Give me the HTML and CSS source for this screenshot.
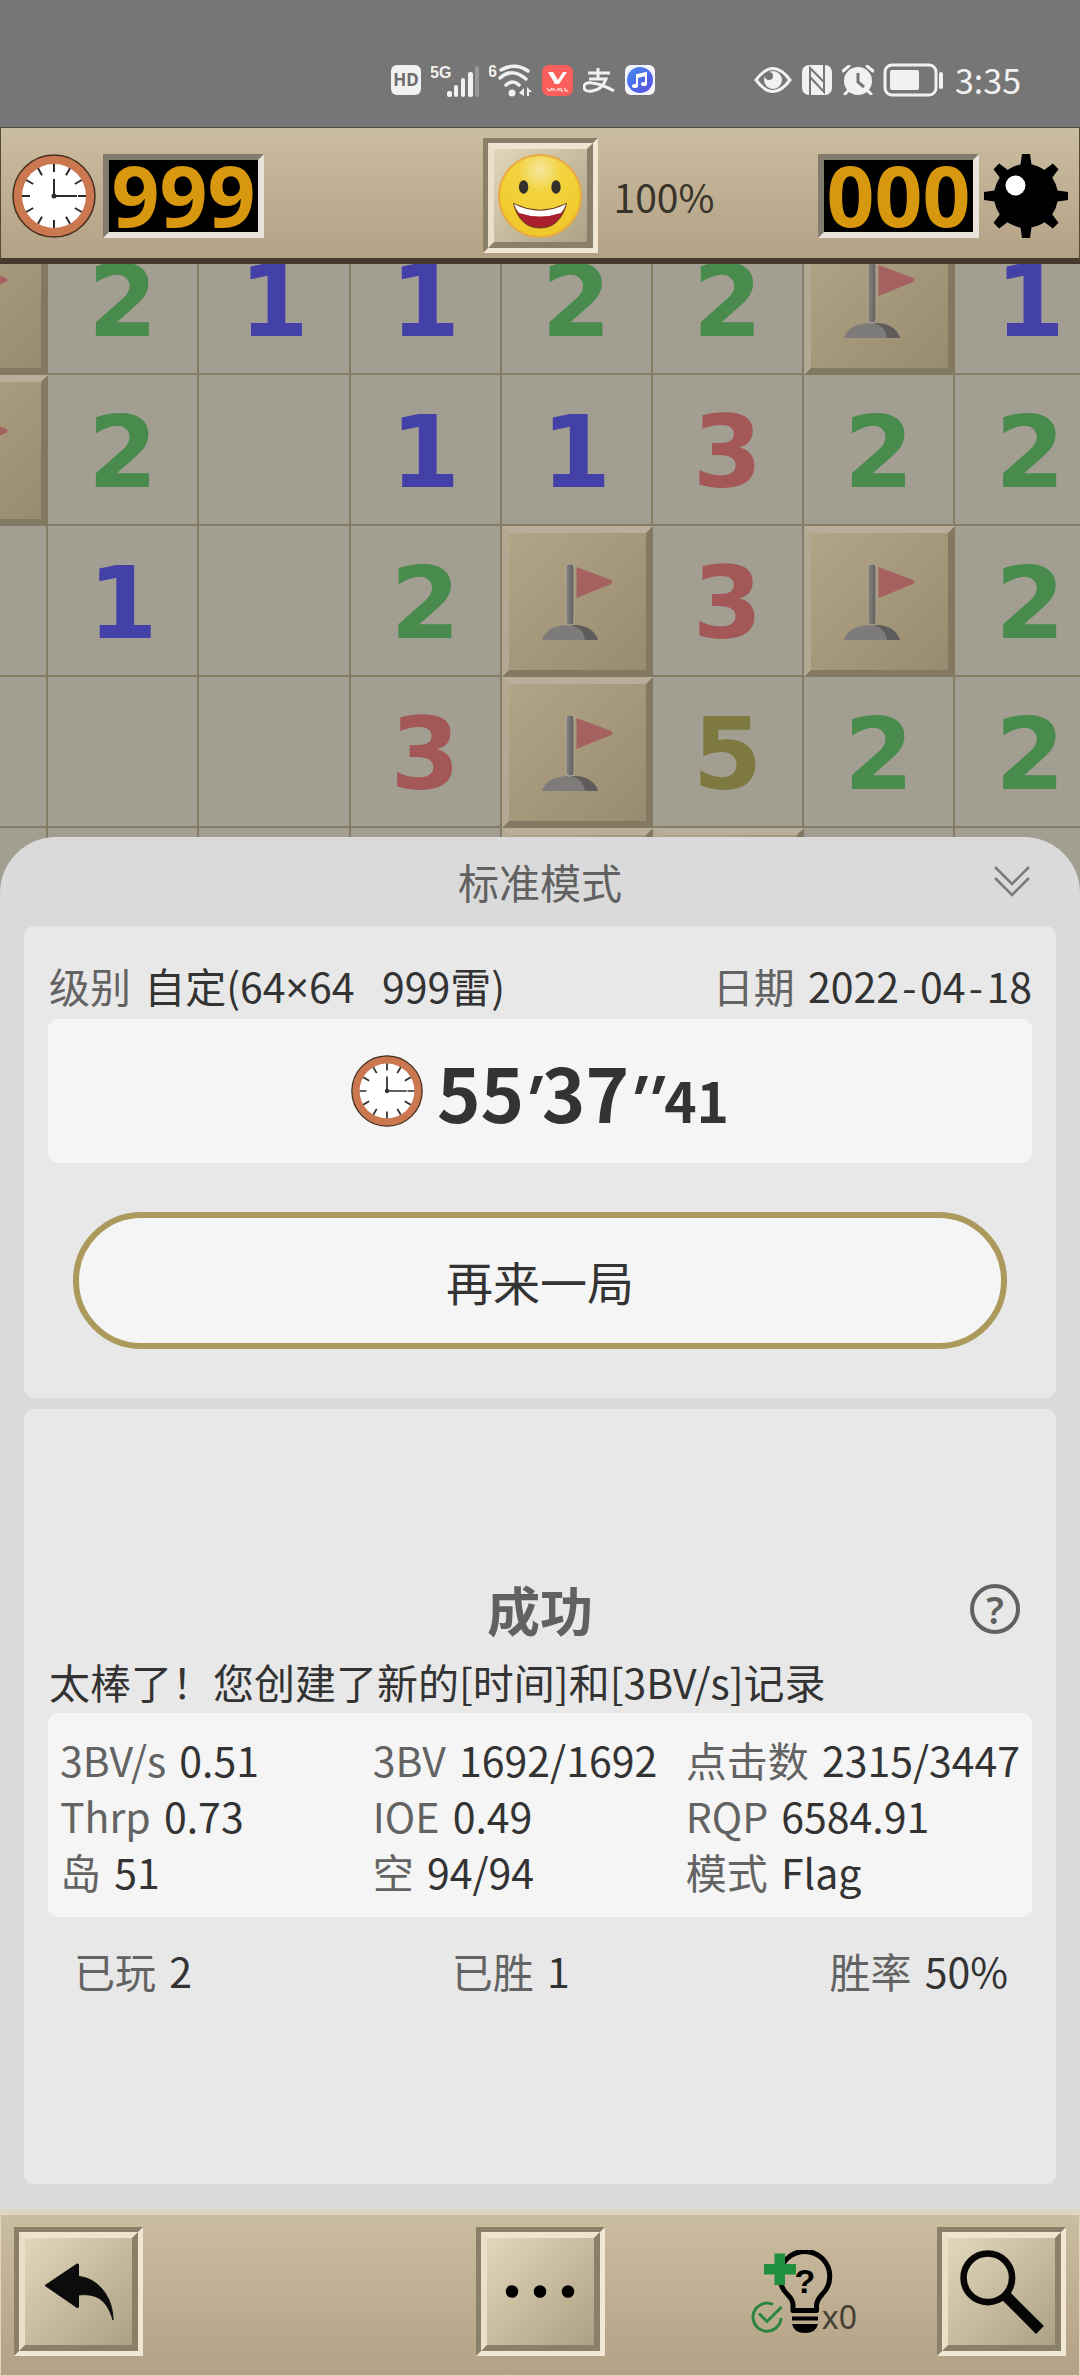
FILE: index.html
```
<!DOCTYPE html>
<html lang="zh-CN">
<head>
<meta charset="utf-8">
<meta name="viewport" content="width=device-width, initial-scale=1">
<title>标准模式</title>
<link rel="stylesheet" href="styles.css">
</head>
<body>
<svg class="defs" aria-hidden="true">
  <defs>
    <linearGradient id="pole" x1="0" x2="1" y1="0" y2="0"><stop offset="0" stop-color="#858482"/><stop offset="1" stop-color="#62605e"/></linearGradient>
    <radialGradient id="faceFill" cx=".5" cy=".18" r=".75"><stop offset="0" stop-color="#f6e6a0"/><stop offset=".35" stop-color="#f2d33e"/><stop offset="1" stop-color="#f0c92c"/></radialGradient>
    <linearGradient id="musicFill" x1="0" x2="1" y1="0" y2="1"><stop offset="0" stop-color="#3f8df2"/><stop offset="1" stop-color="#5a4be0"/></linearGradient>
    <symbol id="flag" viewBox="0 0 137 137">
      <path d="M33 107C36 97 46 92 61 92s25 5 28 15z" fill="#7d7c7a"/>
      <path d="M62 92c14-1 24 5 27 15H76c-1-8-6-13-14-15z" fill="#5f5d5b"/>
      <rect x="57" y="31" width="8" height="61" rx="3" fill="url(#pole)" stroke="#b3a894" stroke-width="1"/>
      <path d="M67.500 34L102 47q3 2 0 4L67.500 65z" fill="#a56160"/>
    </symbol>
    <symbol id="clock" viewBox="0 0 84 84">
      <circle cx="42" cy="42" r="41" fill="#cb7750" stroke="#45301f" stroke-width="1.500"/>
      <circle cx="42" cy="42" r="32" fill="#fff"/>
      <g stroke="#2e2b2b" stroke-width="2" fill="none">
        <path d="M42 10v8M42 74v-8M10 42h8M74 42h-8M26 14.300l4 6.900M58 14.300l-4 6.900M26 69.700l4-6.900M58 69.700l-4-6.900M14.300 26l6.900 4M69.700 26l-6.900 4M14.300 58l6.900-4M69.700 58l-6.900-4"/>
        <path d="M42 25v17h23"/>
      </g>
      <circle cx="42" cy="42" r="2.500" fill="#2e2b2b"/>
    </symbol>
  </defs>
</svg>

<div class="status">
  <div class="status-group">
    <svg class="s-hd" viewBox="0 0 30 30" role="img" aria-label="HD"><rect width="30" height="30" rx="6" fill="#f1f1f1"/><text x="15" y="21" text-anchor="middle" class="hd-text">HD</text></svg>
    <svg class="s-signal" viewBox="0 0 48 34" role="img" aria-label="5G">
      <text x="-1" y="15" class="tiny-text">5G</text>
      <g fill="#f1f1f1"><rect x="16" y="28" width="5" height="6" rx="2"/><rect x="23" y="22" width="4" height="12" rx="2"/><rect x="30" y="15" width="4" height="19" rx="2"/><rect x="37" y="9" width="5" height="25" rx="2"/></g>
      <rect x="44" y="3" width="4" height="31" rx="2" fill="#979797"/>
    </svg>
    <svg class="s-wifi" viewBox="0 0 43 34" role="img" aria-label="Wi-Fi 6">
      <text x="-1" y="14" class="tiny-text">6</text>
      <g fill="none" stroke="#f1f1f1" stroke-width="3.500" stroke-linecap="round"><path d="M12 7q14-8 27 1M11 15q12-11 26 1M17 22q7-6 13 0"/></g>
      <circle cx="23" cy="30" r="3.500" fill="#f1f1f1"/>
      <path d="M30 30l5-5v8zM38 24l5 5h-3v4h-2z" fill="#f1f1f1"/>
    </svg>
    <svg class="s-vhall" viewBox="0 0 31 31" role="img" aria-label="Vhall"><rect width="31" height="31" rx="7" fill="#fb5f5b"/><path d="M6 7h5l5 8 5-8h4l-8 12h-4z" fill="#fff"/><path d="M5 23l2 3 3-3v3M12 23v3M14 26l3-3v3M19 23v3h2M23 23v3h3" fill="none" stroke="#fff"/></svg>
    <svg class="s-pay" viewBox="0 0 32 30" role="img" aria-label="支付宝"><path d="M5 8h22M15 3v10M6 14h17q-4 11-14 12-8 1-8-4 0-5 8-4 10 1 22 8" fill="none" stroke="#f1f1f1" stroke-width="3"/></svg>
    <svg class="s-music" viewBox="0 0 30 30" role="img" aria-label="音乐"><rect width="30" height="30" rx="6" fill="#f5f3fc"/><circle cx="15" cy="15" r="13" fill="url(#musicFill)"/><path d="M12 21V10l9-2v11M12 12l9-2" fill="none" stroke="#fff" stroke-width="2"/><ellipse cx="10" cy="21" rx="3" ry="2" fill="#fff"/><ellipse cx="19" cy="19" rx="3" ry="2" fill="#fff"/></svg>
  </div>
  <div class="status-group">
    <svg class="s-eye" viewBox="0 0 38 26" role="img" aria-label="护眼"><path d="M2 13Q19-10 36 13 19 36 2 13z" fill="none" stroke="#f1f1f1" stroke-width="3"/><circle cx="19" cy="13" r="9" fill="#f1f1f1"/><circle cx="15" cy="9" r="4" fill="#767676"/></svg>
    <svg class="s-nfc" viewBox="0 0 30 30" role="img" aria-label="NFC"><rect width="30" height="30" rx="7" fill="#f1f1f1"/><path d="M8 30V3l14 14V3M8 12l14 15V0" fill="none" stroke="#767676" stroke-width="2"/></svg>
    <svg class="s-alarm" viewBox="0 0 32 30" role="img" aria-label="闹钟"><circle cx="16" cy="16" r="14" fill="#f1f1f1"/><path d="M1 6l6-5M31 6l-6-5M3 29l5-5M29 29l-5-5" stroke="#f1f1f1" stroke-width="3" stroke-linecap="round"/><path d="M16 8v9l6 5" fill="none" stroke="#767676" stroke-width="3"/></svg>
    <svg class="s-battery" viewBox="0 0 59 32" role="img" aria-label="电量"><rect x="1" y="1" width="51" height="30" rx="7" fill="none" stroke="#f1f1f1" stroke-width="3"/><rect x="6" y="6" width="29" height="20" rx="2" fill="#f1f1f1"/><rect x="55" y="8" width="4" height="17" rx="2" fill="#f1f1f1"/></svg>
    <time class="status-time">3:35</time>
  </div>
</div>

<header class="topbar">
  <div class="top-left">
    <svg class="icon-lg" role="img" aria-label="用时"><use href="#clock"/></svg>
    <output class="counter">999</output>
  </div>
  <button class="bevel bevel-face" type="button" aria-label="重新开始"><span class="bevel-face-inner">
    <svg class="icon-lg" viewBox="0 0 84 84">
      <circle cx="42" cy="42" r="41" fill="url(#faceFill)" stroke="#e9a93f" stroke-width="2"/>
      <ellipse cx="25.600" cy="33" rx="4.700" ry="6.700" fill="#33302c"/><ellipse cx="58" cy="33" rx="4.700" ry="6.700" fill="#33302c"/>
      <path d="M15.500 49.500Q42 63 68.500 49.500 62 74 42 74T15.500 49.500z" fill="#a9202c" stroke="#5d3d1c" stroke-width="1"/>
      <path d="M16 50Q42 63.500 68 50 66 56 63 59 42 66 21 59 18 56 16 50z" fill="#fff"/>
    </svg></span></button>
  <div class="top-right">
    <span class="percent">100%</span>
    <div class="mines">
      <output class="counter">000</output>
      <svg class="icon-lg" viewBox="0 0 84 84" role="img" aria-label="剩余地雷">
        <circle cx="42" cy="42" r="32"/>
        <path id="spike" d="M36 14l2-14h8l2 14v56l-2 14h-8l-2-14z"/>
        <use href="#spike" transform="rotate(45 42 42)"/><use href="#spike" transform="rotate(90 42 42)"/><use href="#spike" transform="rotate(135 42 42)"/>
        <circle cx="31.500" cy="31.500" r="10" fill="#fff"/>
      </svg>
    </div>
  </div>
</header>

<main>
  <div class="board">
    <div class="cells">
      <div class="cell tile"><svg><use href="#flag"/></svg></div><div class="cell n2">2</div><div class="cell n1">1</div><div class="cell n1">1</div><div class="cell n2">2</div><div class="cell n2">2</div><div class="cell tile"><svg><use href="#flag"/></svg></div><div class="cell n1">1</div>
      <div class="cell tile"><svg><use href="#flag"/></svg></div><div class="cell n2">2</div><div class="cell"></div><div class="cell n1">1</div><div class="cell n1">1</div><div class="cell n3">3</div><div class="cell n2">2</div><div class="cell n2">2</div>
      <div class="cell n2">2</div><div class="cell n1">1</div><div class="cell"></div><div class="cell n2">2</div><div class="cell tile"><svg><use href="#flag"/></svg></div><div class="cell n3">3</div><div class="cell tile"><svg><use href="#flag"/></svg></div><div class="cell n2">2</div>
      <div class="cell n2">2</div><div class="cell"></div><div class="cell"></div><div class="cell n3">3</div><div class="cell tile"><svg><use href="#flag"/></svg></div><div class="cell n5">5</div><div class="cell n2">2</div><div class="cell n2">2</div>
      <div class="cell"></div><div class="cell"></div><div class="cell"></div><div class="cell"></div><div class="cell tile"></div><div class="cell tile"></div><div class="cell"></div><div class="cell"></div>
    </div>
  </div>

  <section class="sheet">
    <div class="sheet-head">
      <h1>标准模式</h1>
      <button class="plain collapse" type="button" aria-label="收起"><svg viewBox="0 0 36 32"><path d="M1 2l17 17L35 2M1 13l17 17 17-17" fill="none" stroke="#7b7b7b" stroke-width="2.500"/></svg></button>
    </div>

    <div class="card">
      <dl class="meta">
        <div><dt>级别</dt> <dd>自定(64<span class="latin">×</span>64&nbsp;&nbsp; 999雷)</dd></div>
        <div><dt>日期</dt> <dd>2022<span class="dash">-</span>04<span class="dash">-</span>18</dd></div>
      </dl>
      <div class="panel time">
        <svg class="icon-md" role="img" aria-label="用时"><use href="#clock"/></svg>
        <p>55<span class="prime">′</span>37<span class="prime">″</span><small>41</small></p>
      </div>
      <button class="again" type="button">再来一局</button>
    </div>

    <div class="card result">
      <div class="result-head">
        <h2>成功</h2>
        <button class="plain help" type="button" aria-label="帮助">?</button>
      </div>
      <p class="message">太棒了！您创建了新的[时间]和[3BV/s]记录</p>
      <dl class="panel stats">
        <div><dt>3BV/s</dt> <dd>0.51</dd></div><div><dt>3BV</dt> <dd>1692/1692</dd></div><div><dt>点击数</dt> <dd>2315/3447</dd></div>
        <div><dt>Thrp</dt> <dd>0.73</dd></div><div><dt>IOE</dt> <dd>0.49</dd></div><div><dt>RQP</dt> <dd>6584.91</dd></div>
        <div><dt>岛</dt> <dd>51</dd></div><div><dt>空</dt> <dd>94/94</dd></div><div><dt>模式</dt> <dd>Flag</dd></div>
      </dl>
      <dl class="totals">
        <div><dt>已玩</dt> <dd>2</dd></div><div><dt>已胜</dt> <dd>1</dd></div><div><dt>胜率</dt> <dd>50%</dd></div>
      </dl>
    </div>
  </section>
</main>

<footer class="bottombar">
  <div class="bottom-left">
    <button class="bevel bevel-nav" type="button" aria-label="返回"><span class="bevel-face-inner"><svg class="i-back" viewBox="0 0 70 57"><path d="M1 22.500L33 1q1.500-.5 1.500 1v11.500C54 15 69 34 69 57 63 37 53 30 34.500 32v11.500q0 1.500-1.500 1z" fill="#0c0c0c" stroke="#0c0c0c" stroke-linejoin="round"/></svg></span></button>
  </div>
  <button class="bevel bevel-nav" type="button" aria-label="更多"><span class="bevel-face-inner"><svg class="i-back" viewBox="0 0 70 57"><circle cx="7" cy="28.500" r="6.300"/><circle cx="35" cy="28.500" r="6.300"/><circle cx="63" cy="28.500" r="6.300"/></svg></span></button>
  <div class="bottom-right">
    <button class="plain hint" type="button" aria-label="提示">
      <svg class="i-bulb" viewBox="0 0 83 83">
        <path d="M43 60.500h22.500V55Q66 50 71 44.500A25 25 0 1 0 36.500 44.500Q42 50 42 55v5.500z" fill="none" stroke="#000" stroke-width="5" stroke-linejoin="round"/>
        <path d="M41 66.500h26v4H41zM41 74h26q-2 9-13 9t-13-9z"/>
        <text x="54" y="43" text-anchor="middle" class="bulb-text">?</text>
        <path d="M23.500 3.500h10.500V14h11v10.500H34V35H23.500V24.500H13V14h10.500z" fill="#1f8f3e"/>
        <g fill="none" stroke="#2a8540" stroke-width="3"><path d="M22 54.500A14 14 0 1 0 30 68"/><path d="M8 63.500l8 8L30.500 57"/></g>
      </svg>
      <span>x0</span>
    </button>
    <button class="bevel bevel-nav" type="button" aria-label="缩放"><span class="bevel-face-inner"><svg class="icon-lg" viewBox="0 0 83 83"><circle cx="27.500" cy="27.500" r="24" fill="none" stroke="#060606" stroke-width="6.500"/><path d="M45 45l34 34" stroke="#060606" stroke-width="11"/></svg></span></button>
  </div>
</footer>
</body>
</html>
```
FILE: styles.css
```
* { box-sizing: border-box; }
html { background: #dadada; }
body {
  margin: 0;
  min-height: 100vh;
  display: flex;
  flex-direction: column;
  overflow-x: hidden;
  font-family: "Noto Sans CJK SC", "Noto Sans", sans-serif;
  font-size: 41px;
  line-height: 56px;
  color: #333;
}
h1, h2, p, dl, dd { margin: 0; }
svg { display: block; flex: none; }
button { font: inherit; color: inherit; padding: 0; margin: 0; border: 0; background: none; }
.defs { position: absolute; width: 0; height: 0; }
.icon-lg { width: 84px; height: 84px; }
.icon-md { width: 72px; height: 72px; }

/* system status bar */
.status {
  display: flex;
  justify-content: flex-end;
  align-items: center;
  gap: 99px;
  height: 127px;
  padding: 33px 59px 0 0;
  background: #767676;
}
.status-group { display: flex; align-items: center; gap: 10px; }
.s-hd, .s-music, .s-nfc { width: 30px; height: 30px; }
.s-signal { width: 48px; height: 34px; }
.s-wifi { width: 43px; height: 34px; }
.s-vhall { width: 31px; height: 31px; }
.s-pay, .s-alarm { width: 32px; height: 30px; }
.s-eye { width: 38px; height: 26px; }
.s-battery { width: 59px; height: 32px; overflow: visible; }
.hd-text { font: 700 17px "Noto Sans", sans-serif; fill: #6c6c6c; }
.tiny-text { font: 700 16px "Liberation Sans", sans-serif; fill: #f1f1f1; }
.status-time { padding-left: 2px; color: #f1f1f1; font-size: 34px; line-height: 34px; }

/* bars */
.topbar, .bottombar {
  display: grid;
  grid-template-columns: 1fr auto 1fr;
  align-items: center;
  background: linear-gradient(#cbbda0, #b3a185);
}
.topbar { height: 137px; padding: 5px 11px 0; border: 1px solid #55493a; border-bottom: 6px solid #44392c; }
.top-left, .mines { display: flex; align-items: center; gap: 7px; }
.top-right { display: flex; align-items: center; justify-content: space-between; padding-left: 16px; }
.mines { gap: 5px; }
.percent { font-size: 39px; color: #39342b; }
.counter {
  width: 161px;
  height: 84px;
  border: 6px solid;
  border-color: #827b6e #e9e3db #e9e3db #827b6e;
  background: #000;
  color: #d7980f;
  font: 700 84px/70px "Noto Sans", sans-serif;
  text-align: center;
}

/* raised buttons */
.bevel { display: flex; border: 5px solid; border-color: #8a8069 #f0e7d5 #f0e7d5 #8a8069; }
.bevel-face { width: 115px; height: 115px; }
.bevel-nav { width: 129px; height: 129px; }
.bevel-face-inner {
  flex: 1;
  align-self: stretch;
  display: flex;
  align-items: center;
  justify-content: center;
  border: 6px solid;
  border-color: #eee4cf #8a8069 #8a8069 #ebdfc9;
  background: linear-gradient(135deg, #e2d6bb, #aba184);
}

/* mine field */
main { flex: 1; display: flex; flex-direction: column; }
.board { height: 629px; overflow: hidden; background: #a29e92; }
.cells {
  display: grid;
  grid-template-columns: repeat(8, 1fr);
  grid-auto-rows: 151px;
  width: 112%;
  margin: -40px 0 0 -103px;
}
.cell {
  display: flex;
  align-items: center;
  justify-content: center;
  padding-top: 6px;
  border: solid #857c66;
  border-width: 0 2px 2px 0;
  font: 700 100px/100px "DejaVu Sans", sans-serif;
}
.tile {
  padding: 0;
  border-width: 7px;
  border-color: #b8ae9b #837963 #837963 #b3a891;
  background: linear-gradient(135deg, #b1a487, #988b6f);
}
.tile svg { width: 137px; height: 137px; }
.n1 { color: #4340a8; }
.n2 { color: #488b4d; }
.n3 { color: #a35757; }
.n5 { color: #7d793f; }

/* result sheet */
.sheet {
  flex: 1;
  display: flex;
  flex-direction: column;
  gap: 11px;
  margin-top: -56px;
  padding: 0 24px 25px;
  border-radius: 56px 56px 0 0;
  background: #dadada;
  position: relative;
}
.sheet-head {
  display: grid;
  grid-template-columns: 1fr auto 1fr;
  align-items: center;
  height: 89px;
  margin-bottom: -11px;
  padding: 0 26px 2px;
  color: #616161;
}
h1 { grid-column: 2; font-size: 41px; font-weight: 400; }
.plain { cursor: pointer; }
.collapse { justify-self: end; }
.collapse svg { width: 36px; height: 32px; }
.card { padding: 31px 24px 49px; border-radius: 10px; background: #e8e8e8; }
.panel { border-radius: 10px; background: #f5f5f5; }
dt, dd { display: inline; }
dt { color: #636363; margin-right: 4px; }
.latin { font-family: "Noto Sans", sans-serif; line-height: 1; }
.meta { display: flex; justify-content: space-between; margin-bottom: 6px; padding-left: 1px; }
.dash { display: inline-block; width: 21px; text-align: center; }
.time {
  display: flex;
  align-items: center;
  justify-content: center;
  gap: 14px;
  height: 144px;
  font-size: 74px;
  font-weight: 700;
}
.time p { padding-top: 8px; }
.time small { font-size: 55px; }
.prime { font-family: Inter, sans-serif; font-size: 64px; font-style: italic; }
.again {
  display: block;
  width: calc(100% - 50px);
  height: 137px;
  margin: 49px 25px 0;
  border: 6px solid #ac9a5c;
  border-radius: 69px;
  background: #f5f5f5;
  font-size: 47px;
}
.result { flex: 1; display: flex; flex-direction: column; justify-content: center; padding: 0 24px 30px; }
.result-head { display: grid; grid-template-columns: 1fr auto 1fr; align-items: center; height: 88px; padding: 0 12px; color: #616161; }
h2 { grid-column: 2; font-size: 53px; }
.help {
  justify-self: end;
  width: 50px;
  height: 50px;
  border: 4px solid #616161;
  border-radius: 50%;
  font: 600 38px/42px "Noto Sans", sans-serif;
}
.message { margin-bottom: 4px; padding-left: 1px; }
.stats { display: grid; grid-template-columns: 1fr 1fr auto; padding: 18px 12px; white-space: nowrap; }
.totals { display: flex; justify-content: space-between; padding: 25px 24px 0 26px; }

/* bottom navigation */
.bottombar { height: 167px; padding: 0 13px 7px; border: 1px solid #dfd5c2; border-top-width: 6px; }
.bottom-right { display: flex; align-items: center; justify-content: flex-end; gap: 80px; }
.hint { display: flex; align-items: flex-end; color: #453f35; font: 32px/32px "Noto Sans", sans-serif; }
.hint span { margin-left: -12px; }
.i-back { width: 70px; height: 57px; }
.i-bulb { width: 83px; height: 83px; }
.bulb-text { font: 700 34px "Liberation Sans", sans-serif; }
```
